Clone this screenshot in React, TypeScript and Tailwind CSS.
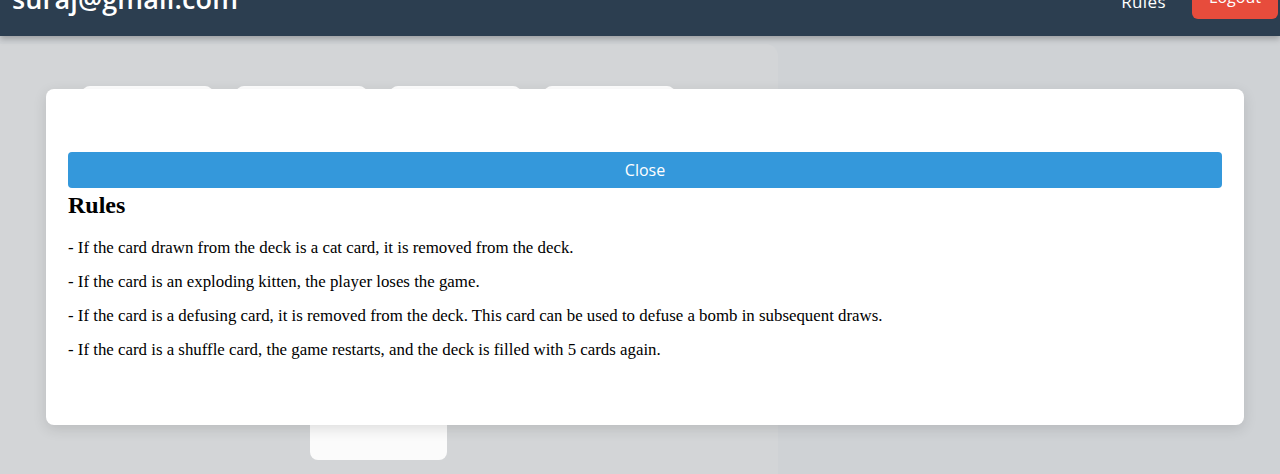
import React from "react";

export default function App() {
  const rules = [
    "- If the card drawn from the deck is a cat card, it is removed from the deck.",
    "- If the card is an exploding kitten, the player loses the game.",
    "- If the card is a defusing card, it is removed from the deck. This card can be used to defuse a bomb in subsequent draws.",
    "- If the card is a shuffle card, the game restarts, and the deck is filled with 5 cards again.",
  ];
  return (
    <div className="relative w-[1280px] h-[474px] overflow-hidden bg-[#cfd2d5]" style={{ fontFamily: "'Open Sans', sans-serif" }}>
      {/* navbar */}
      <div className="relative z-10 h-[36px] bg-[#2c3e50] flex items-end justify-between px-3 shadow-[0_3px_6px_rgba(0,0,0,0.25)]">
        <div className="text-white text-[27px] leading-none font-semibold mb-[24px] tracking-[0.15px]">suraj@gmail.com</div>
        <div className="flex items-end gap-[26px] mr-[-10px]">
          <span className="text-white text-[17px] leading-none mb-[26px] tracking-[0.4px]">Rules</span>
          <button className="bg-[#e74c3c] text-white text-[16px] w-[86px] h-[40px] rounded-md flex items-end justify-center pb-[10px] mb-[17px]">Logout</button>
        </div>
      </div>
      {/* background content */}
      <div className="flex gap-0 pt-[8px]">
        <div className="w-[778px] h-[440px] bg-[#d3d5d7] rounded-tr-xl relative">
          <div className="flex gap-[23px] pl-[82px] pt-[42px]">
            <div className="w-[131px] h-[60px] bg-white rounded-lg" />
            <div className="w-[131px] h-[60px] bg-white rounded-lg" />
            <div className="w-[131px] h-[60px] bg-white rounded-lg" />
            <div className="w-[131px] h-[60px] bg-white rounded-lg" />
          </div>
          <div className="ml-[310px] mt-[220px] w-[137px] h-[94px] bg-[#fbfbfb] rounded-lg" />
        </div>
      </div>
      {/* modal */}
      <div className="absolute left-[46px] top-[89px] w-[1198px] h-[336px] bg-white rounded-lg shadow-[0_4px_14px_rgba(0,0,0,0.12)] px-[22px] pt-[63px]">
        <button className="w-full h-[36px] bg-[#3498db] text-white text-[16px] rounded flex items-center justify-center">Close</button>
        <div style={{ fontFamily: "'Liberation Serif', serif" }} className="text-black">
          <h2 className="text-[24px] font-bold leading-[29px] mt-[3px] mb-[19px]">Rules</h2>
          {rules.map((r) => (
            <p key={r} className="text-[16.85px] leading-[18px] mb-[16px]">{r}</p>
          ))}
        </div>
      </div>
    </div>
  );
}
